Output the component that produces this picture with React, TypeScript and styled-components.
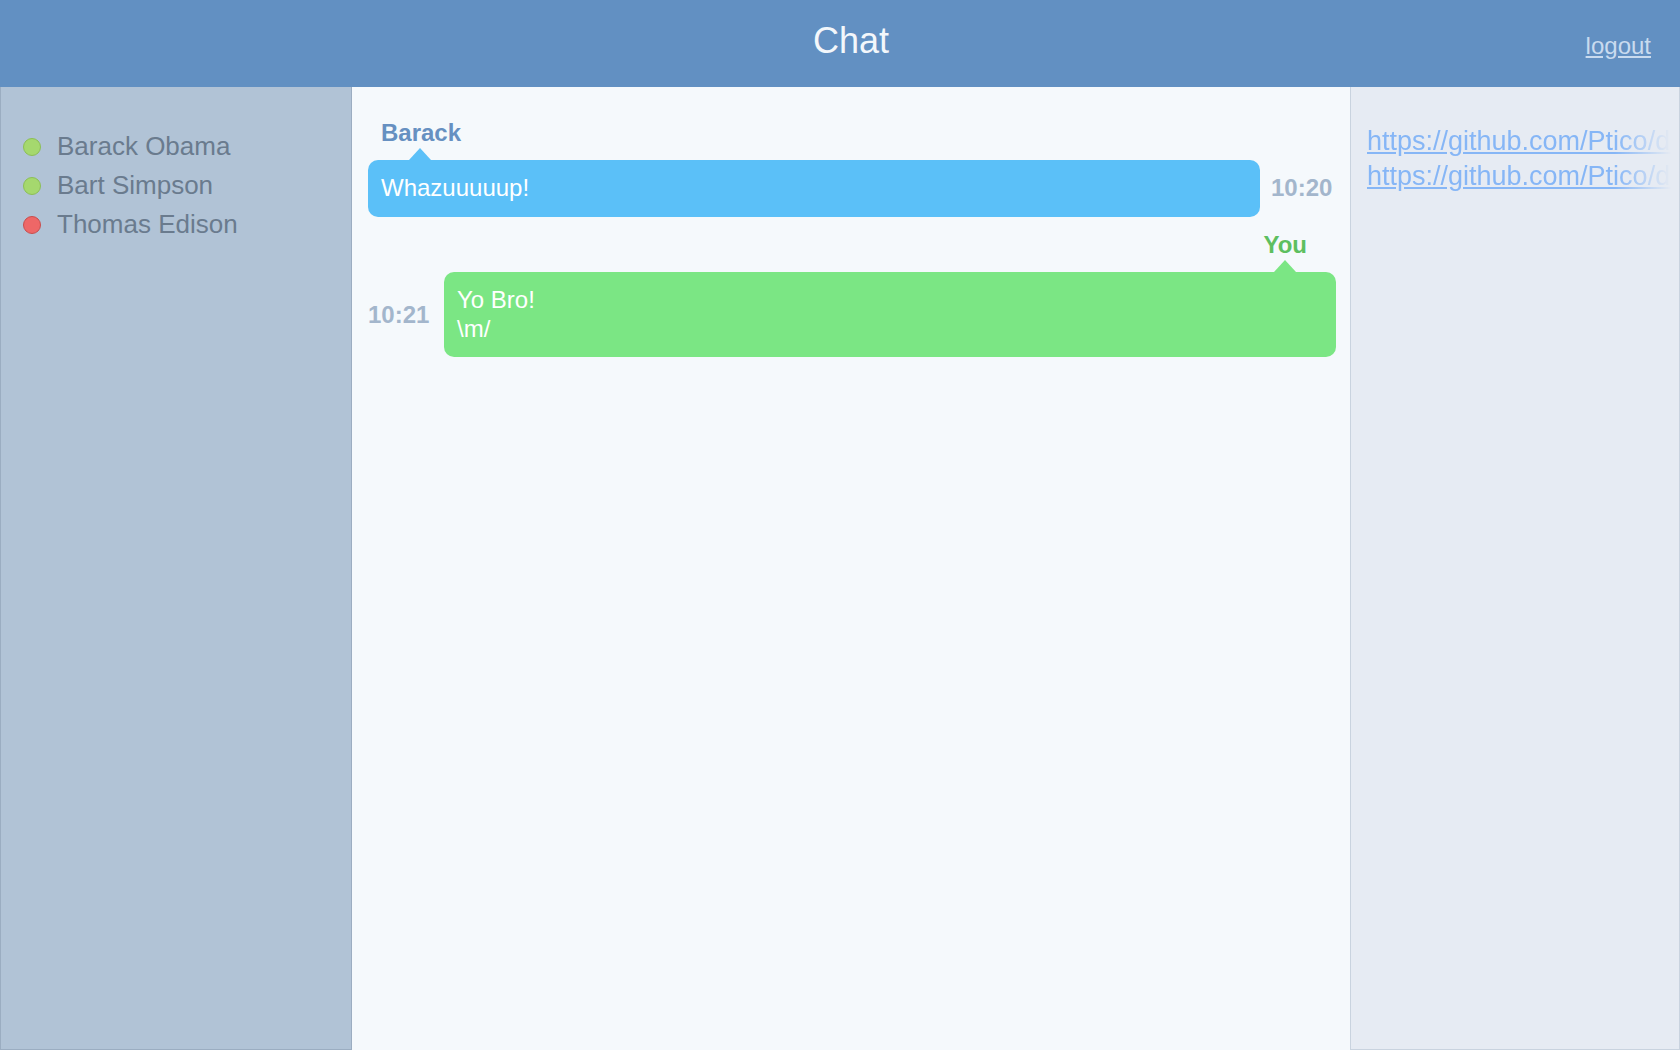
import React from "react";
import styled, { createGlobalStyle } from "styled-components";

type Status = "online" | "offline";

interface User {
    name: string;
    status: Status;
}

interface Message {
    author: string;
    mine: boolean;
    time: string;
    lines: string[];
}

const users: User[] = [
    { name: "Barack Obama", status: "online" },
    { name: "Bart Simpson", status: "online" },
    { name: "Thomas Edison", status: "offline" },
];

const messages: Message[] = [
    { author: "Barack", mine: false, time: "10:20", lines: ["Whazuuuuup!"] },
    { author: "You", mine: true, time: "10:21", lines: ["Yo Bro!", "\\m/"] },
];

const links = [
    "https://github.com/Ptico/demo-chat",
    "https://github.com/Ptico/demo-chat-server",
];

const GlobalStyle = createGlobalStyle`
    html, body {
        margin: 0;
        padding: 0;
        height: 100%;
    }
    body {
        font-family: "Liberation Sans", Arial, Helvetica, sans-serif;
        background: #f5f9fc;
    }
    #root {
        height: 100%;
    }
`;

const Layout = styled.div`
    display: flex;
    flex-direction: column;
    height: 100vh;
    overflow: hidden;
`;

const Header = styled.header`
    display: grid;
    grid-template-columns: 352px 1fr 330px;
    align-items: center;
    height: 87px;
    flex: 0 0 87px;
    background: #6290c2;
`;

const Title = styled.h1`
    grid-column: 2;
    margin: 0 0 6px;
    text-align: center;
    font-size: 36px;
    line-height: 36px;
    font-weight: normal;
    color: #f3f7fb;
`;

const Logout = styled.a`
    grid-column: 3;
    justify-self: end;
    margin: 4px 29px 0 0;
    font-size: 24px;
    line-height: 24px;
    color: #c9dbef;
    text-decoration: underline;
    cursor: pointer;
`;

const Main = styled.div`
    display: flex;
    flex: 1;
    min-height: 0;
`;

const UsersPanel = styled.aside`
    box-sizing: border-box;
    flex: 0 0 352px;
    padding: 40px 0 0 22px;
    background: #b1c3d6;
    border: 1px solid #9badc1;
    border-top: none;
`;

const UserRow = styled.div`
    display: flex;
    align-items: center;
    gap: 16px;
    height: 39px;
    font-size: 26px;
    color: #6a7b8e;
`;

const StatusDot = styled.span<{ $status: Status }>`
    box-sizing: border-box;
    flex: 0 0 18px;
    width: 18px;
    height: 18px;
    border-radius: 50%;
    background: ${(p) => (p.$status === "online" ? "#a5d86e" : "#ee6767")};
    border: 1px solid ${(p) => (p.$status === "online" ? "#8cbf55" : "#c84d4d")};
`;

const ChatPanel = styled.section`
    flex: 1;
    min-width: 0;
    padding: 34px 14px 0 16px;
    background: #f5f9fc;
`;

const Group = styled.div`
    & + & {
        margin-top: 16px;
    }
`;

const Author = styled.div<{ $mine: boolean }>`
    font-size: 24px;
    line-height: 24px;
    font-weight: bold;
    color: ${(p) => (p.$mine ? "#5dbf60" : "#6690c1")};
    text-align: ${(p) => (p.$mine ? "right" : "left")};
    padding: ${(p) => (p.$mine ? "0 29px 0 0" : "0 0 0 13px")};
    margin-bottom: 15px;
`;

const Row = styled.div<{ $mine: boolean }>`
    display: flex;
    align-items: center;
    flex-direction: ${(p) => (p.$mine ? "row-reverse" : "row")};
`;

const Bubble = styled.div<{ $mine: boolean }>`
    position: relative;
    flex: 1;
    padding: 14px 13px;
    border-radius: 10px;
    font-size: 24px;
    line-height: 28.8px;
    color: #ffffff;
    background: ${(p) => (p.$mine ? "#7be684" : "#5bc0f8")};

    &::before {
        content: "";
        position: absolute;
        top: -12px;
        ${(p) => (p.$mine ? "right: 40px;" : "left: 41px;")}
        border-left: 11px solid transparent;
        border-right: 11px solid transparent;
        border-bottom: 12px solid ${(p) => (p.$mine ? "#7be684" : "#5bc0f8")};
    }
`;

const Time = styled.div<{ $mine: boolean }>`
    box-sizing: border-box;
    flex: 0 0 76px;
    padding-left: ${(p) => (p.$mine ? "0" : "11px")};
    font-size: 24px;
    font-weight: bold;
    color: #a3b6cc;
`;

const LinksPanel = styled.aside`
    box-sizing: border-box;
    flex: 0 0 330px;
    padding: 37px 8px 0 16px;
    background: #e6ebf3;
    border: 1px solid #c9d3df;
    border-top: none;
    overflow: hidden;
`;

const LinkList = styled.div`
    mask-image: linear-gradient(to right, #000 0, #000 calc(100% - 56px), transparent 100%);
    -webkit-mask-image: linear-gradient(to right, #000 0, #000 calc(100% - 56px), transparent 100%);
`;

const LinkItem = styled.a`
    display: block;
    white-space: nowrap;
    font-size: 27px;
    line-height: 35px;
    color: #86b6f6;
    text-decoration: underline;
`;

export default function App() {
    return (
        <Layout>
            <GlobalStyle />
            <Header>
                <Title>Chat</Title>
                <Logout>logout</Logout>
            </Header>
            <Main>
                <UsersPanel>
                    {users.map((u) => (
                        <UserRow key={u.name}>
                            <StatusDot $status={u.status} />
                            {u.name}
                        </UserRow>
                    ))}
                </UsersPanel>
                <ChatPanel>
                    {messages.map((m, i) => (
                        <Group key={i}>
                            <Author $mine={m.mine}>{m.author}</Author>
                            <Row $mine={m.mine}>
                                <Bubble $mine={m.mine}>
                                    {m.lines.map((l, j) => (
                                        <div key={j}>{l}</div>
                                    ))}
                                </Bubble>
                                <Time $mine={m.mine}>{m.time}</Time>
                            </Row>
                        </Group>
                    ))}
                </ChatPanel>
                <LinksPanel>
                    <LinkList>
                        {links.map((l) => (
                            <LinkItem key={l} href={l}>
                                {l}
                            </LinkItem>
                        ))}
                    </LinkList>
                </LinksPanel>
            </Main>
        </Layout>
    );
}
